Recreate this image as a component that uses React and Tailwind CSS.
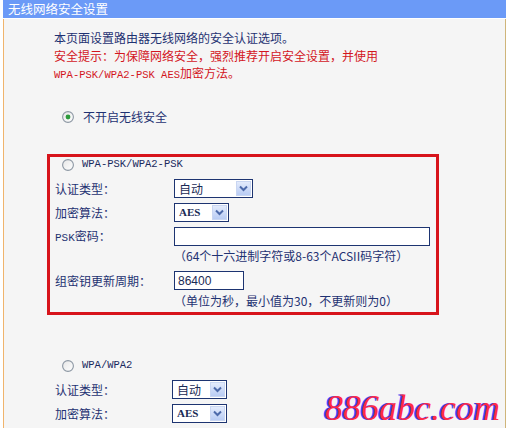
import React from "react";

const cjk = { fontFamily: '"Noto Sans CJK SC", "Noto Sans", sans-serif' };
const mono = { fontFamily: '"Liberation Mono", "DejaVu Sans Mono", monospace' };

export default function App() {
  return (
    <div className="relative flex min-h-screen w-[508px] flex-col bg-white" style={cjk}>
      <div className="ml-[3px] flex w-[503px] flex-1 flex-col">
        {/* Header */}
        <div className="flex h-[18px] items-center bg-[#6b9af7] pl-[5px] text-[12.5px] leading-none text-white">
          无线网络安全设置
        </div>
        <div className="h-[1px] bg-white" />

        {/* Body */}
        <div className="flex-1 border-l border-r border-l-[#f0b46c] border-r-[#cfb57a] bg-[#f5f5f5] pt-[10px] text-[12px] text-[#1f3272]">
          <div className="pl-[50px] leading-[17.5px]">
            <p>本页面设置路由器无线网络的安全认证选项。</p>
            <p className="text-[#d3161e]">安全提示：为保障网络安全，强烈推荐开启安全设置，并使用</p>
            <p className="text-[#d3161e]">
              <span className="text-[10.5px]" style={mono}>WPA-PSK/WPA2-PSK AES</span>加密方法。
            </p>
          </div>

          {/* no security */}
          <div className="mt-[23px] flex h-[18px] items-center pl-[58px]">
            <Radio checked />
            <span className="ml-[9px]">不开启无线安全</span>
          </div>

          {/* WPA-PSK box */}
          <div className="ml-[43px] mt-[28px] w-[392px] border-[3px] border-[#d7141b]">
            <div className="flex h-[16px] items-center pl-[12px]">
              <Radio />
              <span className="ml-[8px] text-[10.5px] text-[#1a2a5e]" style={mono}>WPA-PSK/WPA2-PSK</span>
            </div>
            <Field label="认证类型：" className="mt-[6px]">
              <Select value="自动" w="w-[79px]" />
            </Field>
            <Field label="加密算法：" className="mt-[4px]">
              <Select value="AES" w="w-[55px]" latin />
            </Field>
            <Field
              label={
                <>
                  <span className="text-[11px]" style={mono}>PSK</span>密码：
                </>
              }
              className="mt-[4px]"
            >
              <div className="h-[19px] w-[256px] border border-[#1d3471] bg-white" />
            </Field>
            <div className="flex h-[18px] items-center pl-[124px]">（64个十六进制字符或8-63个ACSII码字符）</div>
            <Field label="组密钥更新周期：" className="mt-[6px]">
              <div
                className="flex h-[19px] w-[70px] items-center border border-[#1d3471] bg-white pl-[3px] text-[12px] text-[#1a2a55]"
                style={{ fontFamily: '"Liberation Sans", Arial, sans-serif' }}
              >
                86400
              </div>
            </Field>
            <div className="flex h-[21px] items-center pl-[124px]">（单位为秒，最小值为30，不更新则为0）</div>
          </div>

          {/* WPA box */}
          <div className="mt-[43px] flex h-[16px] items-center pl-[58px]">
            <Radio />
            <span className="ml-[8px] text-[10.5px] text-[#1a2a5e]" style={mono}>WPA/WPA2</span>
          </div>
          <div className="pl-[51px]">
            <Field label="认证类型：" className="mt-[6px]" labelW="w-[117px]" pad="">
              <Select value="自动" w="w-[55px]" />
            </Field>
            <Field label="加密算法：" className="mt-[4px]" labelW="w-[117px]" pad="">
              <Select value="AES" w="w-[55px]" latin />
            </Field>
          </div>
        </div>
      </div>

      {/* watermark */}
      <div
        className="absolute bottom-[2px] right-[8px] text-[36px] italic leading-none text-[#ff2a48]"
        style={{
          fontFamily: '"Liberation Serif", "DejaVu Serif", serif',
          textShadow: "-2px 0 #3d45ff",
        }}
      >
        886abc.com
      </div>
    </div>
  );
}

function Field({ label, children, className = "", labelW = "w-[119px]", pad = "pl-[5px]" }) {
  return (
    <div className={`flex h-[20px] items-center ${pad} ${className}`}>
      <span className={`${labelW} shrink-0`}>{label}</span>
      {children}
    </div>
  );
}

function Select({ value, w, latin }) {
  return (
    <div className={`flex h-[19px] ${w} items-center justify-between border border-[#1d3471] bg-white pl-[4px] pr-[1px]`}>
      <span
        className={latin ? "text-[11px] font-bold text-[#1a2a55]" : "text-[12px] text-[#1a2a55]"}
        style={latin ? { fontFamily: '"Liberation Serif", serif' } : undefined}
      >
        {value}
      </span>
      <span className="flex h-[15px] w-[15px] items-center justify-center border border-[#c9d6f2] bg-gradient-to-b from-[#e3ebfc] to-[#b9ccf4]">
        <svg width="9" height="7" viewBox="0 0 9 7">
          <path d="M1 1.5 L4.5 5 L8 1.5" fill="none" stroke="#4d6aab" strokeWidth="2" />
        </svg>
      </span>
    </div>
  );
}

function Radio({ checked }) {
  return (
    <svg width="12" height="12" viewBox="0 0 12 12" className="shrink-0">
      <defs>
        <linearGradient id="rg" x1="0" y1="0" x2="1" y2="1">
          <stop offset="0" stopColor="#e6e6e6" />
          <stop offset="1" stopColor="#ffffff" />
        </linearGradient>
      </defs>
      <circle cx="6" cy="6" r="5.4" fill="url(#rg)" stroke="#8c97a3" strokeWidth="1.1" />
      {checked && <circle cx="6" cy="6" r="2.4" fill="#2d9a3c" />}
    </svg>
  );
}
